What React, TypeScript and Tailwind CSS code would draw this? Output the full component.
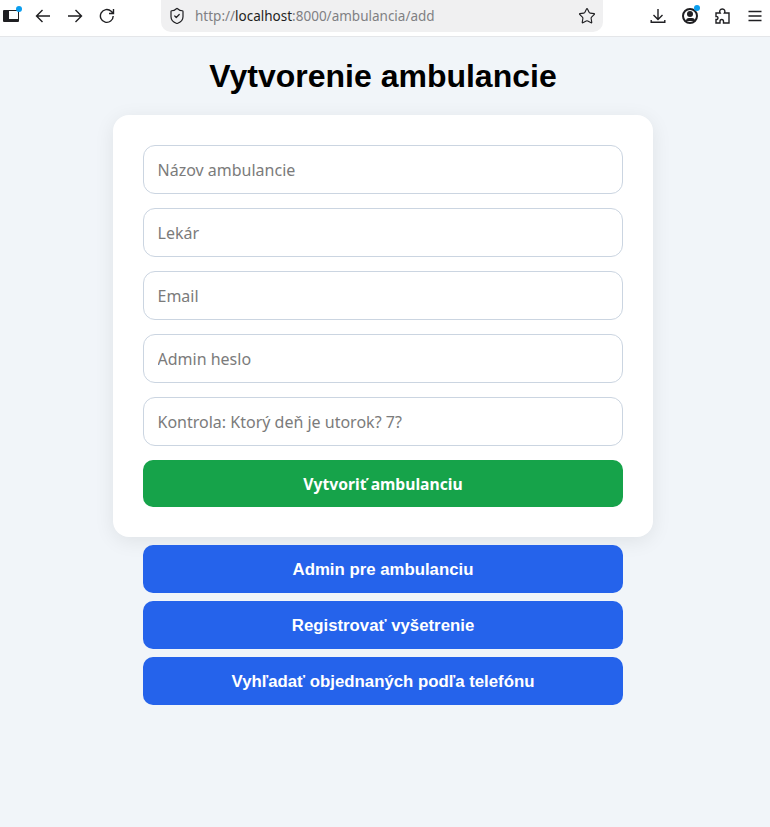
import { ShieldCheck, Star } from 'lucide-react';

const fields = ['Názov ambulancie', 'Lekár', 'Email', 'Admin heslo', 'Kontrola: Ktorý deň je utorok? 7?'];

const links = ['Admin pre ambulanciu', 'Registrovať vyšetrenie', 'Vyhľadať objednaných podľa telefónu'];

function Glyph({ d, className }: { d: string; className: string }) {
  return (
    <svg viewBox="0 0 16 16" width={16} height={16} fill="none" stroke="currentColor" strokeWidth={1.4} className={className}>
      <path d={d} />
    </svg>
  );
}

function Toolbar() {
  return (
    <div className="h-[37px] bg-white border-b border-[#e4e6e9] flex items-start text-[#1f1f22]">
      {/* tab sidebar button */}
      <div className="relative w-[16px] h-[12px] ml-[3px] mt-[10px] border-y-[1.5px] border-r-[1.5px] border-l-[6px] border-b-[3px] border-[#1f1f22] rounded-[1px]">
        <span className="absolute -top-[5px] left-[7px] w-[6px] h-[6px] rounded-full bg-[#0a9eef]" />
      </div>
      <Glyph className="ml-[16px] mt-[8px]" d="M15 8H1.5M7.5 2 1.5 8l6 6" />
      <Glyph className="ml-[16px] mt-[8px]" d="M1 8h13.5M8.5 2l6 6-6 6" />
      <Glyph className="ml-[16px] mt-[8px]" d="M14.2 8a6.4 6.4 0 1 1-2-4.7L14.5 5.5M14.5 1v4.5H10" />
      <div className="ml-[46px] w-[442px] h-[32px] bg-[#f0f0f1] rounded-b-[10px] flex items-center pl-[7px] pr-[7px]">
        <ShieldCheck size={18} strokeWidth={1.6} />
        <span className="ml-[9px] flex-1 text-[13.5px] text-[#808083] font-['Noto_Sans',sans-serif]">
          http://<span className="text-[#1f1f22]">localhost</span>:8000/ambulancia/add
        </span>
        <Star size={18} strokeWidth={1.5} />
      </div>
      <Glyph className="ml-[47px] mt-[8px]" d="M8 1v10.5M3.5 7l4.5 4.5L12.5 7M1.2 12v2.3h13.6V12" />
      <div className="relative ml-[16px] mt-[8px] w-[16px] h-[16px] rounded-full border-[2px] border-[#1f1f22] flex flex-col items-center">
        <span className="mt-[1px] w-[6px] h-[6px] rounded-full bg-[#1f1f22]" />
        <span className="mt-[1px] w-[9px] h-[3px] rounded-t-full bg-[#1f1f22]" />
        <span className="absolute -top-[5px] -right-[4px] w-[6px] h-[6px] rounded-full bg-[#0a9eef]" />
      </div>
      <Glyph className="ml-[16px] mt-[8px]" d="M2 5h4.2C5 3 6 1 8.3 1s3.3 2 2.1 4H15v10H9.5v-1.5c0-2.6-3.5-2.6-3.5 0V15H2v-3.5c2.6.5 2.6-3.5 0-3z" />
      <Glyph className="ml-[17px] mt-[8px]" d="M1.5 3.5h13M1.5 8h13M1.5 12.5h13" />
    </div>
  );
}

export default function App() {
  return (
    <div className="min-h-[827px] bg-[#f1f5f9] font-['Liberation_Sans',sans-serif]">
      <Toolbar />
      <div className="w-[766px] flex flex-col items-center">
        <h1 className="mt-[21px] text-[32px] leading-[37px] font-bold text-black">Vytvorenie ambulancie</h1>
        <form className="mt-[20px] w-[540px] bg-white rounded-[16px] p-[30px] shadow-[0_4px_20px_rgba(0,0,0,0.08)] flex flex-col gap-[14px] font-['Noto_Sans',sans-serif]">
          {fields.map((field) => (
            <input
              key={field}
              placeholder={field}
              className="w-full h-[49px] pl-[13.5px] pr-[14px] border border-[#cbd5e1] rounded-[12px] text-[16px] bg-white placeholder:text-[#7b7b7b]"
            />
          ))}
          <button type="button" className="h-[47px] pt-[2px] rounded-[10px] bg-[#16a34a] text-white font-bold text-[15.7px]">
            Vytvoriť ambulanciu
          </button>
        </form>
        <div className="mt-[8px] w-[480px] flex flex-col gap-[8px]">
          {links.map((link) => (
            <a key={link} href="#" className="h-[48px] pt-[2px] rounded-[10px] bg-[#2563eb] text-white font-bold text-[16.8px] flex items-center justify-center">
              {link}
            </a>
          ))}
        </div>
      </div>
    </div>
  );
}
